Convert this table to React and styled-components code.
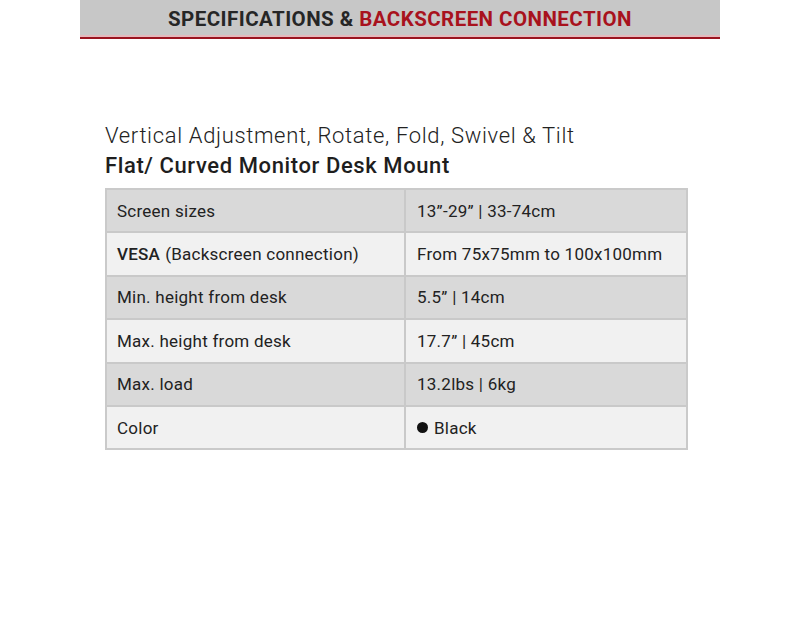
import React from "react";
import styled, { createGlobalStyle } from "styled-components";

const Global = createGlobalStyle`
  html, body { margin: 0; padding: 0; background: #ffffff; }
  body { font-family: "Roboto", "Liberation Sans", sans-serif; color: #222; }
`;

const Page = styled.div`
  width: 800px;
  height: 640px;
  display: flex;
  flex-direction: column;
  align-items: center;
  background: #fff;
`;

const Header = styled.div`
  width: 640px;
  height: 35px;
  background: #c7c7c7;
  display: flex;
  align-items: center;
  justify-content: center;
  border-bottom: 2px solid #e4b9bd;
  box-shadow: 0 2px 0 #9a1420;
`;

const HeaderText = styled.h1`
  margin: 0;
  font-family: "Roboto", sans-serif;
  font-weight: 700;
  font-size: 20.5px;
  letter-spacing: 0.45px;
  color: #262626;
  padding-top: 2px;
`;

const Red = styled.span`
  color: #a8121d;
`;

const Content = styled.div`
  width: 583px;
  margin-top: 84px;
  align-self: flex-start;
  margin-left: 105px;
  display: flex;
  flex-direction: column;
`;

const Subtitle = styled.div`
  font-family: "Roboto", sans-serif;
  font-weight: 300;
  font-size: 22px;
  line-height: 30px;
  color: #222;
  letter-spacing: 0.65px;
`;

const Title = styled.div`
  font-family: "Roboto", sans-serif;
  font-weight: 500;
  font-size: 22px;
  line-height: 29px;
  color: #1e1e1e;
  letter-spacing: 0.6px;
  margin-bottom: 8px;
`;

const Table = styled.div`
  display: grid;
  grid-template-columns: 297px 1fr;
  border: 2px solid #cacaca;
`;

const Cell = styled.div`
  height: 41.4px;
  display: flex;
  align-items: center;
  padding-left: ${(p) => (p.$right ? "11px" : "10px")};
  background: ${(p) => (p.$dark ? "#d9d9d9" : "#f1f1f1")};
  border-left: ${(p) => (p.$right ? "2px solid #c9c9c9" : "none")};
  border-top: ${(p) => (p.$first ? "none" : "2px solid #c9c9c9")};
  font-family: "Roboto", sans-serif;
  font-size: 17px;
  color: #222;
  letter-spacing: 0.25px;
`;

const Bold = styled.span`
  font-weight: 500;
  margin-right: 5px;
`;

const Dot = styled.span`
  display: inline-block;
  width: 11px;
  height: 11px;
  border-radius: 50%;
  background: #111;
  margin-right: 6px;
`;

const rows = [
  ["Screen sizes", "13\u201d-29\u201d | 33-74cm"],
  [
    <>
      <Bold>VESA</Bold>(Backscreen connection)
    </>,
    "From 75x75mm to 100x100mm",
  ],
  ["Min. height from desk", "5.5\u201d | 14cm"],
  ["Max. height from desk", "17.7\u201d | 45cm"],
  ["Max. load", "13.2lbs | 6kg"],
  [
    "Color",
    <>
      <Dot />
      Black
    </>,
  ],
];

export default function App() {
  return (
    <>
      <Global />
      <Page>
        <Header>
          <HeaderText>
            SPECIFICATIONS &amp; <Red>BACKSCREEN CONNECTION</Red>
          </HeaderText>
        </Header>
        <Content>
          <Subtitle>Vertical Adjustment, Rotate, Fold, Swivel &amp; Tilt</Subtitle>
          <Title>Flat/ Curved Monitor Desk Mount</Title>
          <Table>
            {rows.map(([a, b], i) => (
              <React.Fragment key={i}>
                <Cell $dark={i % 2 === 0} $first={i === 0}>
                  {a}
                </Cell>
                <Cell $dark={i % 2 === 0} $first={i === 0} $right>
                  {b}
                </Cell>
              </React.Fragment>
            ))}
          </Table>
        </Content>
      </Page>
    </>
  );
}
